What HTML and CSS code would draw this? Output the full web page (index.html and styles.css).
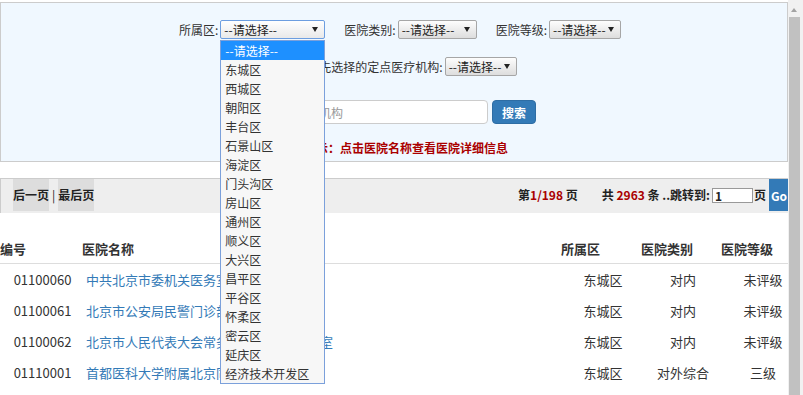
FILE: index.html
```html
<!DOCTYPE html>
<html lang="zh-CN">
<head>
  <meta charset="UTF-8">
  <meta name="viewport" content="width=device-width, initial-scale=1.0">
  <title>定点医疗机构查询</title>
  <link rel="stylesheet" href="styles.css">
</head>
<body>

  <div class="viewport">
    <div class="page">

      <form class="search-panel">
        <div class="row row-filters">
          <div class="filter">
            <label>所属区:</label>
            <span class="select open" style="width:105px">--请选择--<i class="arrow"></i>
              <ul class="dropdown">
                <li class="active">--请选择--</li>
                <li>东城区</li>
                <li>西城区</li>
                <li>朝阳区</li>
                <li>丰台区</li>
                <li>石景山区</li>
                <li>海淀区</li>
                <li>门头沟区</li>
                <li>房山区</li>
                <li>通州区</li>
                <li>顺义区</li>
                <li>大兴区</li>
                <li>昌平区</li>
                <li>平谷区</li>
                <li>怀柔区</li>
                <li>密云区</li>
                <li>延庆区</li>
                <li>经济技术开发区</li>
              </ul>
            </span>
          </div>
          <div class="filter">
            <label>医院类别:</label>
            <span class="select" style="width:79px">--请选择--<i class="arrow"></i></span>
          </div>
          <div class="filter">
            <label>医院等级:</label>
            <span class="select" style="width:72px">--请选择--<i class="arrow"></i></span>
          </div>
        </div>

        <div class="row row-clinic">
          <div class="filter">
            <label>或从您优先选择的定点医疗机构:</label>
            <span class="select" style="width:72px">--请选择--<i class="arrow"></i></span>
          </div>
        </div>

        <div class="row row-search">
          <input class="keyword" type="text" placeholder="请输入医疗机构">
          <button class="btn-search" type="button">搜索</button>
        </div>

        <div class="tip">温馨提示：点击医院名称查看医院详细信息</div>
      </form>

      <div class="pager">
        <div class="pager-left">
          <a href="#" class="page-link">后一页</a><span class="sep">|</span><a href="#" class="page-link">最后页</a>
        </div>
        <div class="pager-right">
          <span class="page-info">第<span class="num">1/198</span> 页</span>
          <span class="total">共 <span class="num">2963</span> 条 ..跳转到:</span>
          <input class="goto" type="text" value="1">
          <span>页</span>
          <button class="btn-go" type="button">Go</button>
        </div>
      </div>

      <table class="list">
        <colgroup>
          <col style="width:82px">
          <col style="width:479px">
          <col style="width:80px">
          <col style="width:80px">
          <col style="width:80px">
        </colgroup>
        <thead>
          <tr>
            <th>编号</th>
            <th>医院名称</th>
            <th>所属区</th>
            <th>医院类别</th>
            <th>医院等级</th>
          </tr>
        </thead>
        <tbody>
          <tr>
            <td class="id">01100060</td>
            <td class="name"><a href="#">中共北京市委机关医务室</a></td>
            <td class="c">东城区</td>
            <td class="c">对内</td>
            <td class="c">未评级</td>
          </tr>
          <tr>
            <td class="id">01100061</td>
            <td class="name"><a href="#">北京市公安局民警门诊部</a></td>
            <td class="c">东城区</td>
            <td class="c">对内</td>
            <td class="c">未评级</td>
          </tr>
          <tr>
            <td class="id">01100062</td>
            <td class="name"><a href="#">北京市人民代表大会常务委员会机关门诊室</a></td>
            <td class="c">东城区</td>
            <td class="c">对内</td>
            <td class="c">未评级</td>
          </tr>
          <tr>
            <td class="id">01110001</td>
            <td class="name"><a href="#">首都医科大学附属北京同仁医院</a></td>
            <td class="c">东城区</td>
            <td class="c">对外综合</td>
            <td class="c">三级</td>
          </tr>
        </tbody>
      </table>

    </div>

    <div class="scrollbar">
      <span class="sb-up"></span>
      <span class="sb-thumb"></span>
    </div>
  </div>

</body>
</html>
```

FILE: styles.css
```css
html, body {
  margin: 0;
  height: 100%;
  overflow: hidden;
}
body {
  font-family: "Noto Sans CJK SC", "Noto Sans", sans-serif;
  font-size: 12px;
  color: #333;
  background: #fff;
}
.viewport {
  display: flex;
  height: 395px;
}
.page {
  width: 788px;
  flex: none;
  overflow: hidden;
}

/* search form */
.search-panel {
  margin: 2px 0 0;
  border: 1px solid #ccc;
  background: #f0f8ff;
  padding: 17px 0 4px;
}
.row {
  display: flex;
  justify-content: center;
  align-items: center;
}
.row-filters {
  height: 19px;
  padding-left: 12px;
}
.row-clinic {
  height: 19px;
  margin-top: 18px;
}
.row-search {
  height: 24px;
  margin-top: 24px;
}
.filter {
  display: flex;
  align-items: center;
}
.filter + .filter {
  margin-left: 19px;
}
.filter label {
  margin-right: 2px;
}
.select {
  position: relative;
  box-sizing: border-box;
  height: 19px;
  line-height: 17px;
  padding-left: 3px;
  border: 1px solid #a6a6a6;
  border-radius: 2px;
  background: linear-gradient(#fdfdfd, #dddddd);
  color: #222;
}
.select.open {
  border-color: #6d9ee0;
  background: linear-gradient(#ffffff, #e9e9e9);
}
.select .arrow {
  position: absolute;
  right: 6px;
  top: 6px;
  border-left: 3px solid transparent;
  border-right: 3px solid transparent;
  border-top: 5px solid #222;
}
.dropdown {
  position: absolute;
  top: 19px;
  left: -1px;
  z-index: 10;
  width: 105px;
  box-sizing: border-box;
  margin: 0;
  padding: 0;
  list-style: none;
  background: #f7f7f7;
  border: 1px solid #7ba0db;
}
.dropdown li {
  height: 19px;
  line-height: 19px;
  padding-left: 4px;
  color: #333;
  white-space: nowrap;
}
.dropdown li.active {
  background: #1e90ff;
  color: #fff;
}
.keyword {
  box-sizing: border-box;
  width: 236px;
  height: 24px;
  padding: 0 6px;
  border: 1px solid #ccc;
  border-radius: 4px;
  font: 12px "Noto Sans CJK SC", sans-serif;
}
.keyword::placeholder { color: #999; }
.btn-search {
  box-sizing: border-box;
  width: 44px;
  height: 24px;
  margin-left: 4px;
  padding: 0;
  border: 1px solid #2e6da4;
  border-radius: 4px;
  background: #337ab7;
  color: #fff;
  font: bold 12px "Noto Sans CJK SC", sans-serif;
}
.tip {
  margin-top: 15px;
  line-height: 18px;
  text-align: center;
  color: #a00;
  font-weight: bold;
}

/* pager */
.pager {
  display: flex;
  align-items: flex-start;
  box-sizing: border-box;
  width: 801px;
  height: 35px;
  margin-top: 16px;
  padding: 0 2px 0 12px;
  border-top: 1px solid #ccc;
  border-left: 1px solid #ccc;
  background: #eee;
  font-weight: bold;
  color: #222;
  line-height: 32px;
}
.page-link {
  display: inline-block;
  background: #ddd;
  color: #222;
  text-decoration: none;
}
.sep {
  margin: 0 3px;
  font-weight: normal;
}
.pager-right {
  display: flex;
  align-items: center;
  margin-left: auto;
  height: 32px;
  white-space: pre;
}
.page-info {
  margin-right: 24px;
}
.num {
  color: #a00;
}
.goto {
  box-sizing: border-box;
  width: 41px;
  height: 15px;
  margin: 0 1px 0 2px;
  padding: 0 2px;
  border: 1px solid #999;
  font: bold 12px "Noto Sans CJK SC", sans-serif;
  color: #222;
}
.btn-go {
  box-sizing: border-box;
  width: 30px;
  height: 32px;
  margin-left: 3px;
  padding: 0 0 0 2px;
  border: none;
  background: #337ab7;
  color: #fff;
  text-align: left;
  font: bold 12px "Noto Sans CJK SC", sans-serif;
}

/* result table */
.list {
  width: 801px;
  margin-top: 20px;
  table-layout: fixed;
  border-spacing: 0;
  font-size: 13px;
}
.list th {
  height: 30px;
  padding: 0;
  text-align: left;
  font-weight: bold;
  color: #333;
  border-bottom: 1px solid #ddd;
}
.list td {
  height: 31px;
  padding: 0;
  text-align: center;
  color: #333;
}
.list td.id { padding-left: 3px; }
.list td.name {
  text-align: left;
  padding-left: 4px;
}
.list td.c { padding-left: 4px; }
.list a {
  color: #337ab7;
  text-decoration: none;
}

/* fake window scrollbar */
.scrollbar {
  width: 15px;
  flex: none;
  display: flex;
  flex-direction: column;
  align-items: flex-start;
  background: #f1f1f1;
}
.sb-up {
  margin: 8px 0 5px 3px;
  border-left: 3.5px solid transparent;
  border-right: 3.5px solid transparent;
  border-bottom: 4px solid #a3a3a3;
}
.sb-thumb {
  flex: 1;
  width: 11px;
  margin-left: 1px;
  background: #c1c1c1;
}
```
